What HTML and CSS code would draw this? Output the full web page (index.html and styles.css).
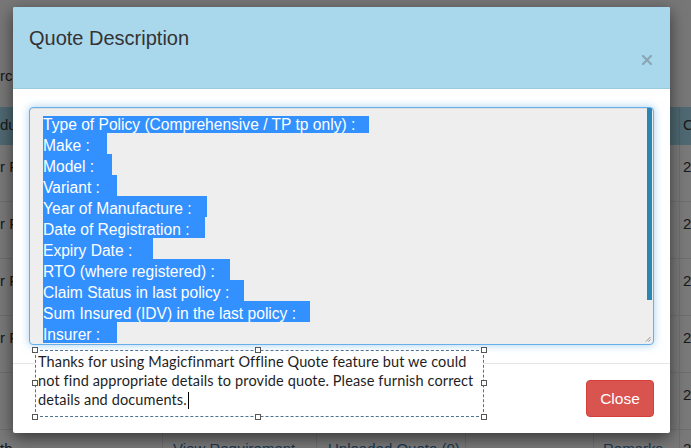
FILE: index.html
```html
<!DOCTYPE html>
<html>
<head>
<meta charset="utf-8">
<title>Quote Description</title>
<link rel="stylesheet" href="styles.css">
</head>
<body>
<div class="page">
  <div class="page-top"><span class="crumb">rch</span></div>
  <div class="grid">
    <div class="grow ghead">
      <div class="c c1">du</div><div class="c c2"></div><div class="c c3"></div><div class="c c4"></div><div class="c c5"></div><div class="c c6">C</div>
    </div>
    <div class="grow"><div class="c c1">r F</div><div class="c c2"></div><div class="c c3"></div><div class="c c4"></div><div class="c c5"></div><div class="c c6">2</div></div>
    <div class="grow"><div class="c c1">r F</div><div class="c c2"></div><div class="c c3"></div><div class="c c4"></div><div class="c c5"></div><div class="c c6">2</div></div>
    <div class="grow"><div class="c c1">r F</div><div class="c c2"></div><div class="c c3"></div><div class="c c4"></div><div class="c c5"></div><div class="c c6">2</div></div>
    <div class="grow"><div class="c c1">r F</div><div class="c c2"></div><div class="c c3"></div><div class="c c4"></div><div class="c c5"></div><div class="c c6">2</div></div>
    <div class="grow"><div class="c c1"></div><div class="c c2"></div><div class="c c3"></div><div class="c c4"></div><div class="c c5"></div><div class="c c6">2</div></div>
    <div class="grow last"><div class="c c1">th</div><div class="c c2 lnk">View Requirement</div><div class="c c3 lnk">Uploaded Quote (0)</div><div class="c c4"></div><div class="c c5 lnk">Remarks</div><div class="c c6">2</div></div>
  </div>
</div>
<div class="backdrop"></div>
<div class="modal">
  <div class="modal-header">
    <h4 class="modal-title">Quote Description</h4>
    <span class="close-x"><svg width="10" height="10" viewBox="0 0 10 10"><path d="M1 1 L9 9 M9 1 L1 9" stroke="#8ba6b3" stroke-width="2.2" stroke-linecap="square"/></svg></span>
  </div>
  <div class="modal-body">
    <div class="textarea">
      <div class="ta-content">
        <div class="ta-line first"><span class="w-type">Type of Policy (Comprehensive / TP tp only) :</span></div>
        <div class="ta-line"><span class="w-make">Make :</span></div>
        <div class="ta-line"><span class="w-model">Model :</span></div>
        <div class="ta-line"><span class="w-variant">Variant :</span></div>
        <div class="ta-line"><span class="w-year">Year of Manufacture :</span></div>
        <div class="ta-line"><span class="w-date">Date of Registration :</span></div>
        <div class="ta-line"><span class="w-expiry">Expiry Date :</span></div>
        <div class="ta-line"><span class="w-rto">RTO (where registered) :</span></div>
        <div class="ta-line"><span class="w-claim">Claim Status in last policy :</span></div>
        <div class="ta-line"><span class="w-sum">Sum Insured (IDV) in the last policy :</span></div>
        <div class="ta-line"><span class="w-insurer">Insurer :</span></div>
      </div>
      <div class="thumb"></div>
      <svg class="grip" width="6" height="6" viewBox="0 0 6 6"><path d="M5.5 1 L1 5.5 M5.5 3.5 L3.5 5.5" stroke="#777" stroke-width="0.8"/></svg>
    </div>
  </div>
  <div class="modal-footer">
    <button class="btn-close">Close</button>
  </div>
  <div class="editbox">
    <p class="edit-text">Thanks for using Magicfinmart Offline Quote feature but we could<br>not find appropriate details to provide quote. Please furnish correct<br>details and documents.<span class="caret"></span></p>
    <span class="h h-tl"></span><span class="h h-tm"></span><span class="h h-tr"></span>
    <span class="h h-ml"></span><span class="h h-mr"></span>
    <span class="h h-bl"></span><span class="h h-bm"></span><span class="h h-br"></span>
  </div>
</div>
</body>
</html>
```
FILE: styles.css
```css
html, body {
  margin: 0;
  padding: 0;
  overflow: hidden;
}
body {
  width: 691px;
  height: 448px;
  position: relative;
  background: #eeeeee;
  font-family: "Liberation Sans", Arial, sans-serif;
  color: #333;
}
.page {
  width: 691px;
  height: 448px;
  overflow: hidden;
}
.page-top {
  height: 107px;
  box-sizing: border-box;
  padding-top: 67px;
  font-size: 15px;
  line-height: 17px;
}
.grid {
  display: flex;
  flex-direction: column;
}
.grow {
  display: flex;
  height: 57px;
  box-sizing: border-box;
  border-bottom: 1px solid #dcdcdc;
  background: #f3f3f3;
}
.grow.last {
  height: 18px;
  border-bottom: none;
}
.grow.ghead {
  height: 38px;
  background: #9fd1e5;
  border-bottom: none;
}
.c {
  box-sizing: border-box;
  font-size: 15px;
  line-height: 17px;
  padding-top: 13px;
  border-right: 1px solid #dcdcdc;
  white-space: nowrap;
  overflow: hidden;
}
.last .c { padding-top: 10px; }
.ghead .c { padding-top: 9px; border-right-color: #8fbfd3; }
.c1 { width: 163px; }
.c2 { width: 154px; padding-left: 10px; }
.c3 { width: 149px; padding-left: 11px; }
.c4 { width: 128px; }
.c5 { width: 86px; padding-left: 9px; }
.c6 { flex: 1; padding-left: 3px; border-right: none; }
.lnk { color: #3a6f9c; }

.backdrop {
  position: absolute;
  left: 0;
  top: 0;
  width: 691px;
  height: 448px;
  background: rgba(0, 0, 0, 0.5);
}

.modal {
  position: absolute;
  left: 13px;
  top: 7px;
  width: 657px;
  height: 426px;
  background: #fff;
  border-radius: 2px;
  box-shadow: 0 5px 16px rgba(0, 0, 0, 0.55);
  display: flex;
  flex-direction: column;
}
.modal-header {
  height: 82px;
  box-sizing: border-box;
  background: #a9d7ec;
  border-bottom: 1px solid #9ccbe0;
  display: flex;
  justify-content: space-between;
  padding: 20px 18px 0 16px;
  border-radius: 2px 2px 0 0;
}
.modal-title {
  margin: 0;
  font-size: 20px;
  line-height: 22px;
  font-weight: normal;
  color: #333;
}
.close-x {
  display: block;
  width: 10px;
  height: 10px;
  margin-top: 28px;
}
.close-x svg { display: block; }

.modal-body {
  padding: 18px 16px;
  height: 274px;
  box-sizing: border-box;
}
.textarea {
  position: relative;
  height: 238px;
  box-sizing: border-box;
  border: 1px solid #66afe9;
  border-radius: 4px;
  background: #eeeeee;
  box-shadow: inset 0 1px 1px rgba(0, 0, 0, .075), 0 0 8px rgba(102, 175, 233, .6);
  overflow: hidden;
}
.ta-content {
  padding: 8px 13px 0;
  font-size: 15.6px;
}
.ta-line {
  height: 21px;
}
.ta-line span {
  display: inline-block;
  vertical-align: top;
  height: 21px;
  line-height: 26px;
  overflow: hidden;
  white-space: nowrap;
  background: #3390ff;
  color: #fff;
}
.ta-line.first { height: 17px; }
.ta-line.first span { height: 17px; line-height: 18px; }
.w-type { width: 326px; }
.w-make { width: 64px; }
.w-model { width: 69px; }
.w-variant { width: 74px; }
.w-year { width: 164px; }
.w-date { width: 162px; }
.w-expiry { width: 110px; }
.w-rto { width: 187px; }
.w-claim { width: 201px; }
.w-sum { width: 267px; }
.w-insurer { width: 74px; }
.thumb {
  position: absolute;
  right: 1px;
  top: 0;
  width: 5px;
  height: 192px;
  background: #2a87b5;
}
.grip {
  position: absolute;
  right: 2px;
  bottom: 2px;
}

.modal-footer {
  flex: 1;
  border-top: 1px solid #e5e5e5;
  display: flex;
  justify-content: flex-end;
  align-items: flex-start;
  padding: 16px;
}
.btn-close {
  width: 68px;
  height: 37px;
  background: #d9534f;
  border: 1px solid #d43f3a;
  border-radius: 4px;
  color: #fff;
  font-family: "Liberation Sans", Arial, sans-serif;
  font-size: 15.5px;
  padding: 0;
}

.editbox {
  position: absolute;
  left: 22px;
  top: 343px;
  width: 449px;
  height: 67px;
  box-sizing: border-box;
  border: 1px dashed #4f7393;
  background: #fff;
}
.edit-text {
  margin: 0;
  padding: 1px 0 0 2px;
  font-family: Lato, "Open Sans", sans-serif;
  font-size: 14.5px;
  letter-spacing: 0.13px;
  line-height: 19px;
  color: #1e1e1e;
  white-space: nowrap;
}
.caret {
  display: inline-block;
  width: 1px;
  height: 17px;
  background: #000;
  vertical-align: -4px;
  margin-left: 1px;
}
.h {
  position: absolute;
  width: 4px;
  height: 4px;
  border: 1px solid #555;
  background: #fff;
}
.h-tl { left: -4px; top: -4px; }
.h-tm { left: 219px; top: -4px; }
.h-tr { right: -4px; top: -4px; }
.h-ml { left: -4px; top: 29px; }
.h-mr { right: -4px; top: 29px; }
.h-bl { left: -4px; bottom: -4px; }
.h-bm { left: 219px; bottom: -4px; }
.h-br { right: -4px; bottom: -4px; }
```
